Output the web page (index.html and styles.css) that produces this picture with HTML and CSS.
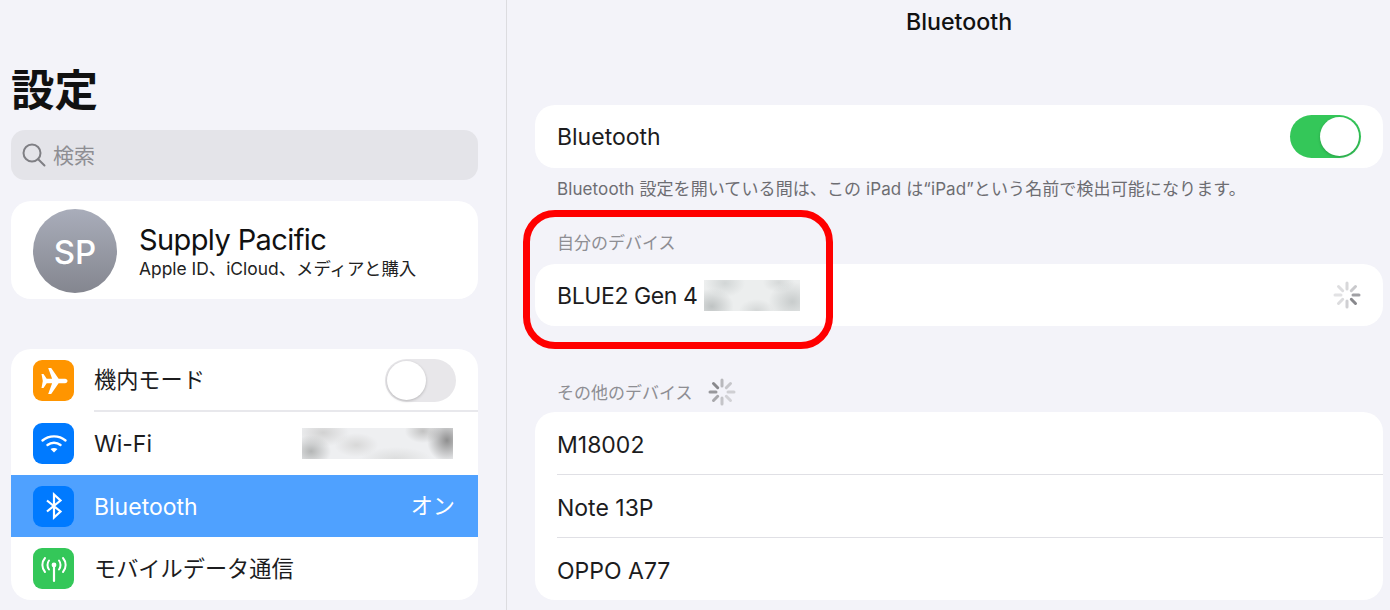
FILE: index.html
```html
<!DOCTYPE html>
<html lang="ja">
<head>
    <meta charset="UTF-8">
    <meta name="viewport" content="width=device-width, initial-scale=1.0">
    <title>Bluetooth 設定</title>
    <link rel="stylesheet" href="styles.css">
</head>
<body>
    <div class="screen">
        <aside class="sidebar">
            <h1 class="sidebar-title">設定</h1>
            <div class="search">
                <svg class="search-icon" viewBox="0 0 24 24" width="24" height="24"><circle cx="10" cy="10" r="8.5"/><path d="M16.2 16.2l6.300 6.300"/></svg>
                <span>検索</span>
            </div>
            <div class="card profile">
                <div class="avatar">SP</div>
                <div class="profile-text">
                    <div class="profile-name">Supply Pacific</div>
                    <div class="profile-sub">Apple ID、iCloud、メディアと購入</div>
                </div>
            </div>
            <div class="card menu">
                <div class="menu-row">
                    <span class="menu-icon icon-orange">
                        <svg viewBox="0 0 28 28" width="28" height="28"><path fill="#fff" d="M1.500 7l2 0 3.200 4.800h5.400L8.200 1h3l7.400 10.800h6.400c1.500 0 2.500 1 2.500 2.200s-1 2.200-2.500 2.200h-6.400L11.200 27h-3l3.900-10.800H6.700L3.500 21h-2l1.300-7z"/></svg>
                    </span>
                    <span class="menu-label label-ja label-up">機内モード</span>
                    <span class="switch switch-off"><span class="knob"></span></span>
                </div>
                <div class="menu-row">
                    <span class="menu-icon icon-blue">
                        <svg viewBox="0 0 28 28" width="28" height="28" fill="none" stroke="#fff" stroke-width="2.400" stroke-linecap="round"><path d="M2.500 10.500c6.500-5.500 16.500-5.500 23 0"/><path d="M7.500 15c3.800-3 9.200-3 13 0"/><path fill="#fff" stroke="none" d="M10.500 19c2.100-1.300 4.900-1.300 7 0l-3.500 3.500z"/></svg>
                    </span>
                    <span class="menu-label">Wi-Fi</span>
                    <span class="blur-patch blur-wifi"></span>
                </div>
                <div class="menu-row menu-row-active">
                    <span class="menu-icon icon-blue">
                        <svg viewBox="0 0 28 28" width="28" height="28" fill="none" stroke="#fff" stroke-width="2.200"><path d="M7 8.500l13.500 11-6.500 6V2.500l6.500 6L7 19.500"/></svg>
                    </span>
                    <span class="menu-label">Bluetooth</span>
                    <span class="menu-value label-ja">オン</span>
                </div>
                <div class="menu-row">
                    <span class="menu-icon icon-green">
                        <svg viewBox="0 0 28 28" width="28" height="28" fill="none" stroke="#fff" stroke-width="2" stroke-linecap="round"><path d="M14 11v15" stroke-width="2.200"/><circle cx="14" cy="10" r="2.400" fill="#fff" stroke="none"/><path d="M9 5.500c-2 2.500-2 6.500 0 9"/><path d="M19 5.500c2 2.500 2 6.500 0 9"/><path d="M5 3c-3.500 4-3.500 10 0 14"/><path d="M23 3c3.500 4 3.500 10 0 14"/></svg>
                    </span>
                    <span class="menu-label label-ja">モバイルデータ通信</span>
                </div>
            </div>
        </aside>

        <main class="detail">
            <div class="detail-title">Bluetooth</div>
            <div class="card row row-first">
                <span>Bluetooth</span>
                <span class="switch switch-on"><span class="knob"></span></span>
            </div>
            <p class="note">Bluetooth 設定を開いている間は、この iPad は“iPad”という名前で検出可能になります。</p>

            <div class="section-head section-mine">自分のデバイス</div>
            <div class="card row">
                <span class="device-name">BLUE2 Gen 4 <span class="blur-patch blur-device"></span></span>
                <svg class="spinner" viewBox="0 0 28 28" width="28" height="28">
                    <g stroke-width="3" stroke-linecap="round">
                        <path stroke="#d8d8da" d="M14 2v6"/>
                        <path stroke="#c9c9cc" d="M22.500 5.500l-4.200 4.200"/>
                        <path stroke="#a0a0a4" d="M26 14h-6"/>
                        <path stroke="#88888c" d="M22.500 22.500l-4.200-4.200"/>
                        <path stroke="#d0d0d3" d="M14 26v-6"/>
                        <path stroke="#dcdcde" d="M5.500 22.500l4.200-4.200"/>
                        <path stroke="#e2e2e4" d="M2 14h6"/>
                        <path stroke="#dedee0" d="M5.500 5.500l4.200 4.200"/>
                    </g>
                </svg>
            </div>

            <div class="section-head section-other">
                <span>その他のデバイス</span>
                <svg class="spinner spinner-head" viewBox="0 0 28 28" width="28" height="28">
                    <g stroke-width="3" stroke-linecap="round">
                        <path stroke="#b8b8bc" d="M14 2v6"/>
                        <path stroke="#c6c6ca" d="M22.500 5.500l-4.200 4.200"/>
                        <path stroke="#cfcfd3" d="M26 14h-6"/>
                        <path stroke="#d2d2d6" d="M22.500 22.500l-4.200-4.200"/>
                        <path stroke="#c4c4c8" d="M14 26v-6"/>
                        <path stroke="#a8a8ac" d="M5.500 22.500l4.200-4.200"/>
                        <path stroke="#98989c" d="M2 14h6"/>
                        <path stroke="#88888c" d="M5.500 5.500l4.200 4.200"/>
                    </g>
                </svg>
            </div>
            <div class="card device-list">
                <div class="device-row">M18002</div>
                <div class="device-row">Note 13P</div>
                <div class="device-row">OPPO A77</div>
            </div>
        </main>

        <div class="highlight"></div>
    </div>
</body>
</html>
```

FILE: styles.css
```css
* {
    box-sizing: border-box;
}
html, body {
    margin: 0;
    height: 610px;
    overflow: hidden;
}
body {
    font-family: Inter, "Noto Sans CJK JP", sans-serif;
    background: #f3f3f9;
    color: #1c1c1e;
}
.screen {
    position: relative;
    display: flex;
    height: 610px;
}
.card {
    background: #fff;
    border-radius: 20px;
}

/* left column */
.sidebar {
    width: 507px;
    flex: none;
    padding: 0 28px 0 11px;
    border-right: 1px solid #dcdce0;
}
.sidebar-title {
    margin: 0;
    padding-top: 64px;
    height: 130px;
    font-size: 43.5px;
    line-height: 52px;
    font-weight: 700;
    color: #111;
}
.search {
    display: flex;
    align-items: center;
    gap: 7px;
    height: 50px;
    padding: 0 0 3px 11px;
    background: #e4e4e9;
    border-radius: 14px;
    font-size: 21px;
    color: #8e8e93;
}
.search-icon {
    fill: none;
    stroke: #7f7f84;
    stroke-width: 2;
    stroke-linecap: round;
    margin-top: 3px;
}
.profile {
    display: flex;
    align-items: center;
    gap: 22px;
    height: 98px;
    margin-top: 21px;
    padding: 2px 0 0 22px;
}
.avatar {
    width: 84px;
    height: 84px;
    border-radius: 50%;
    background: linear-gradient(#a9adba, #84868f);
    color: #fff;
    font-size: 33px;
    font-weight: 500;
    line-height: 87px;
    text-align: center;
}
.profile-text {
    padding-top: 2px;
}
.profile-name {
    font-size: 29px;
    line-height: 34px;
    letter-spacing: -0.6px;
    color: #111;
}
.profile-sub {
    font-size: 17.4px;
    line-height: 24px;
    color: #222;
}
.menu {
    margin-top: 50px;
    height: 251px;
    overflow: hidden;
}
.menu-row {
    position: relative;
    display: flex;
    align-items: center;
    height: 63px;
    padding: 0 22px;
    font-size: 23px;
}
.menu-row:first-child::after {
    content: "";
    position: absolute;
    left: 83px;
    right: 0;
    bottom: 0;
    height: 2px;
    background: #e8e8ec;
}
.menu-row-active {
    height: 62px;
    background: #4fa1ff;
    color: #fff;
}
.menu-icon {
    display: flex;
    align-items: center;
    justify-content: center;
    width: 41px;
    height: 41px;
    flex: none;
    margin-right: 20px;
    border-radius: 9px;
}
.icon-orange { background: #ff9500; }
.icon-blue { background: #007aff; }
.icon-green { background: #34c759; }
.menu-label {
    flex: 1;
}
.label-ja {
    font-size: 22.2px;
    padding-bottom: 4px;
}
.label-up {
    padding-bottom: 6px;
}
.menu-row-active .menu-label {
    padding-top: 1px;
}
.menu-value {
    margin-right: 1px;
}

/* switches */
.switch {
    display: flex;
    width: 71px;
    height: 43px;
    flex: none;
    padding: 2px;
    border-radius: 22px;
}
.switch-off {
    background: #e8e7ea;
}
.switch-on {
    background: #34c759;
    justify-content: flex-end;
}
.knob {
    width: 39px;
    height: 39px;
    border-radius: 50%;
    background: #fff;
    box-shadow: 0 1px 3px rgba(0, 0, 0, 0.22);
}

/* blurred-out names */
.blur-patch {
    display: inline-block;
    vertical-align: middle;
}
.blur-wifi {
    width: 151px;
    height: 31px;
    margin-right: 3px;
    background:
        radial-gradient(ellipse 20px 22px at 96% 40%, #8f8f8f, transparent),
        radial-gradient(ellipse 18px 12px at 80% 10%, #c2c2c2, transparent),
        radial-gradient(ellipse 20px 16px at 6% 75%, #b4b6b6, transparent),
        radial-gradient(ellipse 26px 14px at 14% 15%, #d2d2d2, transparent),
        radial-gradient(ellipse 36px 12px at 62% 100%, #dcdddd, transparent),
        radial-gradient(ellipse 22px 12px at 36% 55%, #d8d8d8, transparent),
        #eeeff1;
}
.blur-device {
    width: 96px;
    height: 31px;
    background:
        radial-gradient(ellipse 22px 18px at 8% 85%, #bfc3c3, transparent),
        radial-gradient(ellipse 20px 14px at 22% 10%, #d2d6d6, transparent),
        radial-gradient(ellipse 24px 20px at 92% 70%, #c8cccc, transparent),
        radial-gradient(ellipse 18px 12px at 55% 100%, #d4d7d7, transparent),
        radial-gradient(ellipse 16px 10px at 78% 8%, #d6d9d9, transparent),
        #eceeee;
}

/* right column */
.detail {
    flex: 1;
    padding: 0 7px 0 28px;
}
.detail-title {
    height: 105px;
    padding-top: 8px;
    font-size: 23.2px;
    line-height: 28px;
    font-weight: 500;
    text-align: center;
    color: #111;
}
.row {
    display: flex;
    align-items: center;
    justify-content: space-between;
    height: 62px;
    padding: 0 22px;
    font-size: 23px;
}
.row-first {
    height: 63px;
}
.note {
    margin: 0;
    height: 42px;
    padding: 9px 22px 0;
    font-size: 17px;
    line-height: 24px;
    letter-spacing: 0.1px;
    color: #6d6d72;
}
.section-head {
    display: flex;
    align-items: center;
    gap: 15px;
    padding: 0 22px;
    font-size: 17px;
    color: #8e8e93;
}
.section-mine {
    height: 54px;
    padding-top: 9px;
}
.section-other {
    height: 86px;
    padding-top: 44px;
}
.spinner {
    flex: none;
}
.spinner-head {
    margin-top: 2px;
}
.device-name {
    display: flex;
    align-items: center;
    gap: 6px;
    padding-top: 2px;
    letter-spacing: -0.4px;
}
.device-name .blur-patch {
    margin-top: -2px;
}
.device-list {
    height: 188px;
}
.device-row {
    display: flex;
    align-items: center;
    height: 63px;
    margin-left: 22px;
    padding-top: 3px;
    font-size: 23px;
}
.device-row:first-child {
    height: 62px;
}
.device-row + .device-row {
    border-top: 1px solid #e0e0e5;
}

/* red annotation drawn over the screenshot */
.highlight {
    position: absolute;
    left: 523px;
    top: 210px;
    width: 310px;
    height: 139px;
    border: 7px solid #ff0000;
    border-radius: 32px;
}
```
